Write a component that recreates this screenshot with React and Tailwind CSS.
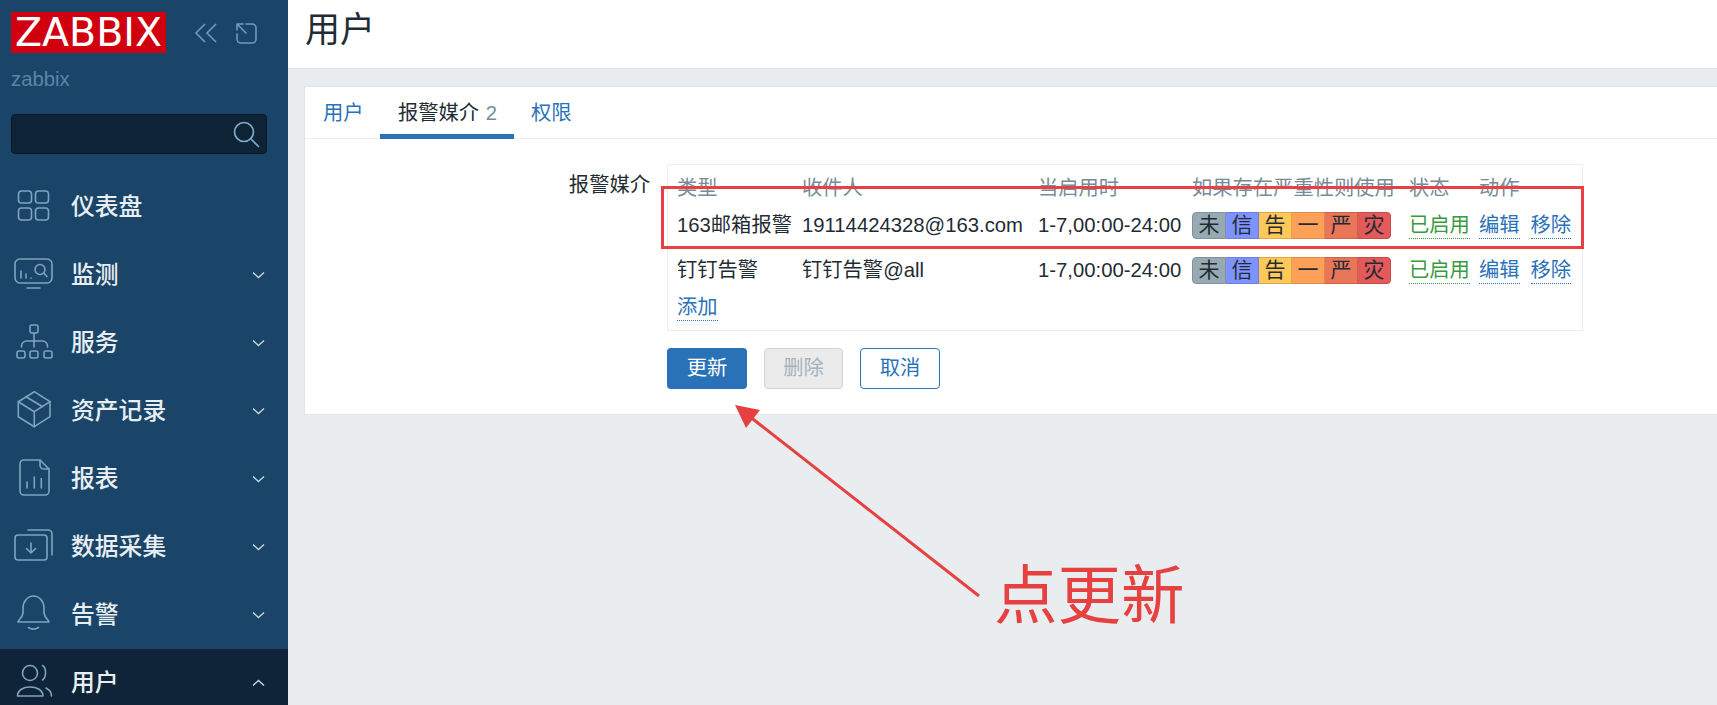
const FONT = "[font-family:'Liberation_Sans','Noto_Sans_CJK_SC',sans-serif]";

function Icon({ children }) {
  return (
    <svg viewBox="0 0 48 48" width="48" height="48" fill="none" stroke="#7fa3bf" strokeWidth="1.6" strokeLinecap="round" strokeLinejoin="round" className="shrink-0">
      {children}
    </svg>
  );
}

const icons = {
  dash: (
    <>
      <rect x="8.5" y="8" width="13" height="12" rx="3" />
      <rect x="25.5" y="8" width="13" height="12" rx="3" />
      <rect x="8.5" y="25" width="13" height="12" rx="3" />
      <rect x="25.5" y="25" width="13" height="12" rx="3" />
    </>
  ),
  monitor: (
    <>
      <rect x="5" y="8" width="37" height="24" rx="5" />
      <path d="M17 37h13M11 20v7M16 23v4M21 27v.2" />
      <circle cx="30" cy="18.5" r="5" />
      <path d="M33.7 22l3.3 3.5" />
    </>
  ),
  service: (
    <>
      <rect x="20" y="6" width="8" height="8" rx="2" />
      <rect x="7" y="32" width="8" height="7" rx="2" />
      <rect x="20" y="32" width="8" height="7" rx="2" />
      <rect x="34" y="32" width="8" height="7" rx="2" />
      <path d="M24 14v14M11.5 28v-1a5 5 0 0 1 5-5h16a5 5 0 0 1 5 5v1" />
    </>
  ),
  box: (
    <>
      <path d="M24.3 4.7L40 14.7V29.7L24.3 39.7L8.3 29.7V14.7Z" />
      <path d="M8.3 14.7L24.3 24.7L40 14.7M24.3 24.7V39.7M16 9.7L32.7 19.7" />
    </>
  ),
  report: (
    <>
      <path d="M14 5h16l9 9v22a4 4 0 0 1-4 4H14a4 4 0 0 1-4-4V9a4 4 0 0 1 4-4Z" />
      <path d="M30 5v5a4 4 0 0 0 4 4h5M17 27v6M24.3 22v11M31.3 23.5V33" />
    </>
  ),
  data: (
    <>
      <rect x="5" y="12" width="32" height="25" rx="3" />
      <path d="M18 7h20a4 4 0 0 1 4 4v21M21 20v10M16.5 25.5L21 30l4.5-4.5" />
    </>
  ),
  bell: (
    <>
      <path d="M8 31c0-2 4-3 5-9v-5a10.500 12 0 0 1 21 0v5c1 6 5 7 5 9Z" />
      <path d="M18.500 36.500c3 2 7 2 10 0" />
    </>
  ),
  users: (
    <>
      <circle cx="20" cy="14" r="7.500" />
      <path d="M7.500 37c0-6 6-9 12.500-9s13 3 13 9Z" />
      <path d="M32.500 6.500c4 2 4 12 0 14.500M36 29c3 1.500 5.500 4 5.500 8" />
    </>
  ),
};

const menu = [
  ["dash", "仪表盘", null],
  ["monitor", "监测", "down"],
  ["service", "服务", "down"],
  ["box", "资产记录", "down"],
  ["report", "报表", "down"],
  ["data", "数据采集", "down"],
  ["bell", "告警", "down"],
  ["users", "用户", "up"],
];

function Chevron({ dir }) {
  return (
    <svg width="13" height="8" viewBox="0 0 13 8" fill="none" stroke="#c7d6e1" strokeWidth="1.4" className="ml-auto mr-[23px]">
      <path d={dir === "down" ? "M1 1.500l5.500 5 5.500-5" : "M1 6.500l5.500-5 5.500 5"} />
    </svg>
  );
}

function Sidebar() {
  return (
    <aside className="w-[288px] shrink-0 flex flex-col bg-[#1a4568]">
      <div className="flex items-start pl-[11px] pt-[12px] shrink-0">
        <div className="w-[155px] h-[41px] bg-[#d0000f] text-white text-[39.5px] leading-[41px] text-center [font-family:'DejaVu_Sans',sans-serif] font-normal">
          ZABBIX
        </div>
        <svg width="24" height="20" viewBox="0 0 24 20" fill="none" stroke="#6b9cc4" strokeWidth="1.6" className="ml-[28px] mt-[11px]">
          <path d="M11 1L2 10l9 9M22 1l-9 9 9 9" />
        </svg>
        <svg width="22" height="22" viewBox="0 0 22 22" fill="none" stroke="#6b9cc4" strokeWidth="1.6" strokeLinecap="round" className="ml-[17px] mt-[10px]">
          <path d="M11 2h6a4 4 0 0 1 4 4v11a4 4 0 0 1-4 4H6a4 4 0 0 1-4-4v-5M2 2l9 9M2 2v6M2 2h6" />
        </svg>
      </div>
      <div className="pl-[11px] mt-[13px] text-[20.3px] leading-[26px] text-[#5f84a3] shrink-0">zabbix</div>
      <div className="mx-[11px] mt-[22px] h-[40px] w-[256px] shrink-0 rounded-[4px] bg-[#0f2337] border border-[#09172a] flex items-center justify-end pr-[6px]">
        <svg width="27" height="27" viewBox="0 0 27 27" fill="none" stroke="#7fa9c9" strokeWidth="1.7">
          <circle cx="11" cy="11" r="9.500" />
          <path d="M18 18l8 8" />
        </svg>
      </div>
      <nav className="mt-[19px] flex flex-col shrink-0">
        {menu.map(([ic, label, dir]) => (
          <div key={label} className={"h-[68px] shrink-0 flex items-center pl-[10px] " + (dir === "up" ? "bg-[#0f2438]" : "")}>
            <Icon>{icons[ic]}</Icon>
            <span className="ml-[13px] text-[23.800px] text-[#e8eef2] font-medium">{label}</span>
            {dir && <Chevron dir={dir} />}
          </div>
        ))}
      </nav>
    </aside>
  );
}

function Lnk({ children, green }) {
  return (
    <span className={"inline-block leading-[26px] border-b border-dotted " + (green ? "text-[#3a9a3f] border-[#3a9a3f]" : "text-[#2a72b8] border-[#2a72b8]")}>
      {children}
    </span>
  );
}

const sev = [
  ["未", "bg-[#97aab3] border-[#7f929b]"],
  ["信", "bg-[#7f93ff] border-[#6a7ee6]"],
  ["告", "bg-[#ffc859] border-[#dfa845]"],
  ["一", "bg-[#ffa059] border-[#dd8a4c]"],
  ["严", "bg-[#e97659] border-[#cd6449]"],
  ["灾", "bg-[#e45959] border-[#c94a4a]"],
];

function Severity() {
  return (
    <div className="flex w-[199px] h-[27px] rounded-[4px] overflow-hidden text-[21px]">
      {sev.map(([t, c], i) => (
        <span key={t} className={"flex-1 flex items-center justify-center border-y border-r " + (i === 0 ? "border-l rounded-l-[4px] " : "") + (i === 5 ? "rounded-r-[4px] " : "") + c}>
          {t}
        </span>
      ))}
    </div>
  );
}

const COLS = "grid grid-cols-[125px_236px_154px_217px_70px_1fr] items-center";

function MediaRow({ type, to, extra }) {
  return (
    <div className={COLS + " h-[38px] " + extra}>
      <span>{type}</span>
      <span>{to}</span>
      <span>1-7,00:00-24:00</span>
      <Severity />
      <span><Lnk green>已启用</Lnk></span>
      <span className="flex gap-[11px]"><Lnk>编辑</Lnk><Lnk>移除</Lnk></span>
    </div>
  );
}

export default function App() {
  return (
    <div className={"relative flex h-[705px] w-[1717px] overflow-hidden bg-[#eaedf0] text-[20.3px] text-[#1f2c33] " + FONT}>
      <Sidebar />
      <main className="flex-1 flex flex-col min-w-0">
        <header className="h-[69px] shrink-0 bg-white border-b border-[#dfe4e7] pl-[17px] flex items-center">
          <h1 className="text-[35px] leading-[58px] font-normal -mt-[8px]">用户</h1>
        </header>
        <section className="mt-[17px] ml-[16px] h-[329px] bg-white border border-[#dfe4e7] border-r-0 flex flex-col">
          <div className="h-[52px] shrink-0 border-b border-[#ebeef0] flex">
            <div className="w-[75px] pl-[18px] pt-[13px] leading-[26px] text-[#2a72b8]">用户</div>
            <div className="w-[134px] pl-[18px] pt-[13px] leading-[26px] h-[52px] border-b-[5px] border-[#2a72b8]">
              报警媒介 <span className="text-[#768d99] ml-[1px]">2</span>
            </div>
            <div className="pl-[17px] pt-[13px] leading-[26px] text-[#2a72b8]">权限</div>
          </div>
          <div className="flex pt-[25px]">
            <div className="w-[345px] text-right leading-[26px] pt-[8px] shrink-0">报警媒介</div>
            <div className="ml-[17px] w-[916px] flex flex-col">
              <div className="h-[167px] border border-[#ebeef0] pl-[9px] pt-[6px]">
                <div className={COLS + " h-[35px] text-[#768d99]"}>
                  <span>类型</span>
                  <span>收件人</span>
                  <span>当启用时</span>
                  <span>如果存在严重性则使用</span>
                  <span>状态</span>
                  <span>动作</span>
                </div>
                <MediaRow type="163邮箱报警" to="19114424328@163.com" extra="" />
                <MediaRow type="钉钉告警" to="钉钉告警@all" extra="mt-[7px]" />
                <div className="h-[36px] flex items-center"><Lnk>添加</Lnk></div>
              </div>
              <div className="flex mt-[17px] gap-[17px]">
                <button className="w-[80px] h-[41px] rounded-[4px] bg-[#2a72b8] text-white">更新</button>
                <button className="w-[79px] h-[41px] rounded-[4px] bg-[#ebebeb] border border-[#cdd5da] text-[#a6b3bb]">删除</button>
                <button className="w-[80px] h-[41px] rounded-[4px] bg-white border border-[#2a72b8] text-[#2a72b8]">取消</button>
              </div>
            </div>
          </div>
        </section>
      </main>

      <div className="absolute left-[661px] top-[186px] w-[923px] h-[63px] border-[3px] border-[#e84145]" />
      <svg className="absolute left-[720px] top-[400px]" width="270" height="205" viewBox="0 0 270 205" fill="none">
        <path d="M259 196L29 16" stroke="#e64040" strokeWidth="3" />
        <path d="M15 5L40 10L26 28Z" fill="#e64040" />
      </svg>
      <div className="absolute left-[994px] top-[556px] text-[63.5px] leading-[80px] text-[#e64040]">点更新</div>
    </div>
  );
}
